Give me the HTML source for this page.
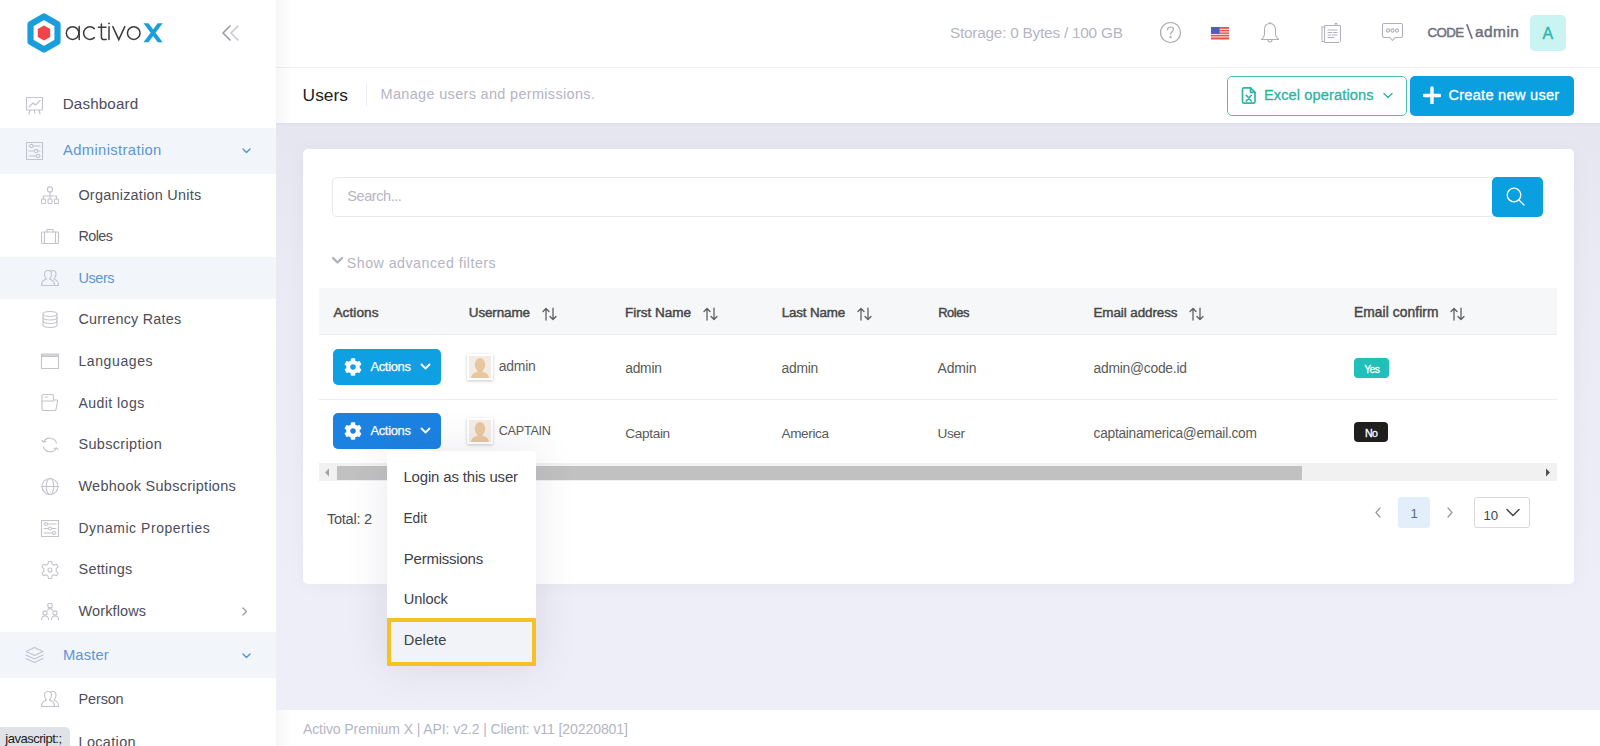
<!DOCTYPE html><html><head><meta charset="utf-8"><style>
*{box-sizing:border-box;margin:0;padding:0}
html,body{width:1600px;height:746px;overflow:hidden}
body{font-family:"Liberation Sans",sans-serif;background:#edeef7;position:relative}
.abs,.ic,.tx{position:absolute}
.tx{white-space:nowrap;line-height:1}
#side{position:absolute;left:0;top:0;width:276px;height:746px;background:#fff}
#hdr{position:absolute;left:276px;top:0;width:1324px;height:123px;background:#fff}
#card{position:absolute;left:303px;top:149px;width:1271px;height:435px;background:#fff;border-radius:5px;box-shadow:0 0 20px rgba(82,63,105,.04)}

</style></head><body>
<div id="side"></div>
<div id="hdr"></div>
<div class="abs" style="left:276px;top:123px;width:1324px;height:587px;background:linear-gradient(#e5e6ef,#e9eaf3 25%,#edeef7 80%)"></div>
<div class="abs" style="left:276px;top:123px;width:1324px;height:3px;background:linear-gradient(rgba(100,100,130,.07),rgba(100,100,130,0))"></div>
<div class="abs" style="left:276px;top:67px;width:1324px;height:1px;background:#f0f0f2"></div>
<div id="card"></div>
<div class="abs" style="left:332px;top:177px;width:1165px;height:40px;border:1px solid #e9e9ef;border-radius:5px 0 0 5px;background:#fff"></div>
<div class="tx " style="left:347.30px;top:189.30px;font-size:14.54px;letter-spacing:-0.447px;color:#b5b5c3;">Search...</div>
<div class="abs" style="left:1492px;top:177px;width:51px;height:40px;border-radius:5px;background:#0aa0e0"></div>
<svg class="ic" style="left:1505px;top:186px" width="22" height="22" viewBox="0 0 22 22" fill="none" stroke="#fff" stroke-width="1.3" stroke-linecap="round" stroke-linejoin="round"><circle cx="9" cy="9" r="6.8"/><path d="M14 14 L19 19"/></svg>
<svg class="ic" style="left:331px;top:256px" width="13" height="10" viewBox="0 0 13 10" fill="none" stroke="#b0b0bb" stroke-width="2.4" stroke-linecap="round" stroke-linejoin="round"><path d="M2 2 L6.5 6.5 L11 2"/></svg>
<div class="tx " style="left:346.80px;top:255.60px;font-size:14.20px;letter-spacing:0.501px;color:#b5b5c3;">Show advanced filters</div>
<div class="abs" style="left:319px;top:288px;width:1238px;height:47px;background:#f6f7f9;border-bottom:1px solid #ebedf2"></div>
<div class="tx " style="left:333.40px;top:305.90px;font-size:13.70px;letter-spacing:0.043px;color:#474747;-webkit-text-stroke:0.45px #474747;">Actions</div>
<div class="tx " style="left:468.80px;top:305.91px;font-size:13.44px;letter-spacing:-0.119px;color:#474747;-webkit-text-stroke:0.45px #474747;">Username</div>
<div class="tx " style="left:625.00px;top:305.90px;font-size:13.56px;letter-spacing:-0.034px;color:#474747;-webkit-text-stroke:0.45px #474747;">First Name</div>
<div class="tx " style="left:781.70px;top:305.91px;font-size:13.38px;letter-spacing:-0.148px;color:#474747;-webkit-text-stroke:0.45px #474747;">Last Name</div>
<div class="tx " style="left:938.20px;top:306.91px;font-size:12.94px;letter-spacing:-0.438px;color:#474747;-webkit-text-stroke:0.45px #474747;">Roles</div>
<div class="tx " style="left:1093.50px;top:305.91px;font-size:13.44px;letter-spacing:-0.096px;color:#474747;-webkit-text-stroke:0.45px #474747;">Email address</div>
<div class="tx " style="left:1354.00px;top:305.91px;font-size:13.79px;letter-spacing:0.084px;color:#474747;-webkit-text-stroke:0.45px #474747;">Email confirm</div>
<svg class="ic" style="left:542px;top:307px" width="15" height="14" viewBox="0 0 15 14" fill="none" stroke="#5c5c5c" stroke-width="1.25" stroke-linecap="round" stroke-linejoin="round"><path d="M4 13 V1.5 M1 4.5 L4 1.5 L7 4.5"/><path d="M11 1 V12.5 M8 9.5 L11 12.5 L14 9.5"/></svg>
<svg class="ic" style="left:703px;top:307px" width="15" height="14" viewBox="0 0 15 14" fill="none" stroke="#5c5c5c" stroke-width="1.25" stroke-linecap="round" stroke-linejoin="round"><path d="M4 13 V1.5 M1 4.5 L4 1.5 L7 4.5"/><path d="M11 1 V12.5 M8 9.5 L11 12.5 L14 9.5"/></svg>
<svg class="ic" style="left:857px;top:307px" width="15" height="14" viewBox="0 0 15 14" fill="none" stroke="#5c5c5c" stroke-width="1.25" stroke-linecap="round" stroke-linejoin="round"><path d="M4 13 V1.5 M1 4.5 L4 1.5 L7 4.5"/><path d="M11 1 V12.5 M8 9.5 L11 12.5 L14 9.5"/></svg>
<svg class="ic" style="left:1189px;top:307px" width="15" height="14" viewBox="0 0 15 14" fill="none" stroke="#5c5c5c" stroke-width="1.25" stroke-linecap="round" stroke-linejoin="round"><path d="M4 13 V1.5 M1 4.5 L4 1.5 L7 4.5"/><path d="M11 1 V12.5 M8 9.5 L11 12.5 L14 9.5"/></svg>
<svg class="ic" style="left:1450px;top:307px" width="15" height="14" viewBox="0 0 15 14" fill="none" stroke="#5c5c5c" stroke-width="1.25" stroke-linecap="round" stroke-linejoin="round"><path d="M4 13 V1.5 M1 4.5 L4 1.5 L7 4.5"/><path d="M11 1 V12.5 M8 9.5 L11 12.5 L14 9.5"/></svg>
<div class="abs" style="left:319px;top:399px;width:1238px;height:1px;background:#ebedf2"></div>
<div class="abs" style="left:333px;top:349px;width:108px;height:36px;border-radius:5px;background:#0ea0e3"></div>
<svg class="ic" style="left:344px;top:358px" width="18" height="18" viewBox="0 0 512 512"><path fill="#fff" d="M487.4 315.7l-42.6-24.6c4.3-23.2 4.3-47 0-70.2l42.6-24.6c4.9-2.8 7.1-8.6 5.5-14-11.1-35.6-30-67.8-54.7-94.6-3.8-4.1-10-5.100-14.800-2.300L380.8 110c-17.9-15.4-38.5-27.3-60.8-35.1V25.8c0-5.600-3.900-10.500-9.400-11.700-36.700-8.200-74.300-7.800-109.200 0-5.500 1.200-9.400 6.100-9.400 11.700V75c-22.200 7.900-42.800 19.800-60.800 35.100L88.700 85.500c-4.900-2.800-11-1.900-14.800 2.300-24.700 26.700-43.600 58.900-54.700 94.600-1.700 5.400 .6 11.200 5.500 14L67.300 221c-4.300 23.200-4.300 47 0 70.200l-42.600 24.600c-4.900 2.800-7.100 8.600-5.500 14 11.100 35.600 30 67.800 54.700 94.600 3.800 4.100 10 5.100 14.800 2.300l42.600-24.600c17.900 15.400 38.500 27.300 60.800 35.100v49.200c0 5.600 3.900 10.500 9.400 11.700 36.700 8.200 74.300 7.800 109.200 0 5.500-1.200 9.400-6.100 9.400-11.700v-49.200c22.200-7.900 42.800-19.800 60.800-35.100l42.600 24.600c4.900 2.800 11 1.900 14.800-2.300 24.700-26.700 43.600-58.900 54.700-94.600 1.500-5.500-.7-11.300-5.600-14.100zM256 336c-44.100 0-80-35.900-80-80s35.900-80 80-80 80 35.900 80 80-35.900 80-80 80z"/></svg>
<div class="tx " style="left:370.40px;top:360.90px;font-size:12.93px;letter-spacing:-0.301px;color:#fff;-webkit-text-stroke:0.25px #fff;">Actions</div>
<svg class="ic" style="left:419px;top:362px" width="13" height="10" viewBox="0 0 13 10" fill="none" stroke="#fff" stroke-width="1.8" stroke-linecap="round" stroke-linejoin="round"><path d="M2.5 2.5 L6.5 6.5 L10.5 2.5"/></svg>
<div class="abs" style="left:467px;top:354px;width:26px;height:26px;background:#f3ece6;border:2px solid #fff;box-shadow:0 1px 3px rgba(0,0,0,.22);overflow:hidden"><svg width="22" height="22" viewBox="0 0 22 22" style="position:absolute;left:0;top:0"><ellipse cx="11" cy="8.8" rx="5.2" ry="6.8" fill="#e8c79f"/><path d="M8.5 14 V16 C5 16.5 2.5 18 2 22 H20 C19.5 18 17 16.5 13.5 16 V14 Z" fill="#e8c79f"/></svg></div>
<div class="abs" style="left:333px;top:413px;width:108px;height:36px;border-radius:5px;background:#1b82e2"></div>
<svg class="ic" style="left:344px;top:422px" width="18" height="18" viewBox="0 0 512 512"><path fill="#fff" d="M487.4 315.7l-42.6-24.6c4.3-23.2 4.3-47 0-70.2l42.6-24.6c4.9-2.8 7.1-8.6 5.5-14-11.1-35.6-30-67.8-54.7-94.6-3.8-4.1-10-5.100-14.800-2.300L380.8 110c-17.9-15.4-38.5-27.3-60.8-35.1V25.8c0-5.600-3.900-10.500-9.400-11.700-36.700-8.200-74.300-7.800-109.200 0-5.500 1.200-9.400 6.100-9.400 11.700V75c-22.200 7.900-42.800 19.800-60.800 35.100L88.700 85.500c-4.900-2.800-11-1.900-14.800 2.300-24.700 26.700-43.600 58.900-54.700 94.600-1.700 5.400 .6 11.200 5.500 14L67.300 221c-4.300 23.200-4.300 47 0 70.200l-42.600 24.600c-4.900 2.800-7.100 8.600-5.500 14 11.100 35.600 30 67.800 54.700 94.600 3.800 4.100 10 5.100 14.800 2.300l42.600-24.600c17.900 15.400 38.500 27.300 60.800 35.100v49.200c0 5.600 3.900 10.500 9.400 11.700 36.700 8.200 74.300 7.800 109.200 0 5.500-1.200 9.400-6.100 9.400-11.700v-49.200c22.200-7.900 42.800-19.800 60.800-35.100l42.600 24.600c4.900 2.800 11 1.900 14.800-2.300 24.700-26.700 43.600-58.900 54.700-94.600 1.500-5.500-.7-11.300-5.600-14.100zM256 336c-44.100 0-80-35.900-80-80s35.900-80 80-80 80 35.900 80 80-35.900 80-80 80z"/></svg>
<div class="tx " style="left:370.40px;top:424.90px;font-size:12.93px;letter-spacing:-0.301px;color:#fff;-webkit-text-stroke:0.25px #fff;">Actions</div>
<svg class="ic" style="left:419px;top:426px" width="13" height="10" viewBox="0 0 13 10" fill="none" stroke="#fff" stroke-width="1.8" stroke-linecap="round" stroke-linejoin="round"><path d="M2.5 2.5 L6.5 6.5 L10.5 2.5"/></svg>
<div class="abs" style="left:467px;top:418px;width:26px;height:26px;background:#f3ece6;border:2px solid #fff;box-shadow:0 1px 3px rgba(0,0,0,.22);overflow:hidden"><svg width="22" height="22" viewBox="0 0 22 22" style="position:absolute;left:0;top:0"><ellipse cx="11" cy="8.8" rx="5.2" ry="6.8" fill="#e8c79f"/><path d="M8.5 14 V16 C5 16.5 2.5 18 2 22 H20 C19.5 18 17 16.5 13.5 16 V14 Z" fill="#e8c79f"/></svg></div>
<div class="tx " style="left:498.70px;top:359.90px;font-size:13.91px;letter-spacing:-0.199px;color:#5a5a5a;">admin</div>
<div class="tx " style="left:498.70px;top:425.11px;font-size:12.66px;letter-spacing:-0.272px;color:#5a5a5a;">CAPTAIN</div>
<div class="tx " style="left:625.20px;top:362.40px;font-size:13.85px;letter-spacing:-0.237px;color:#5a5a5a;">admin</div>
<div class="tx " style="left:781.50px;top:362.40px;font-size:13.85px;letter-spacing:-0.237px;color:#5a5a5a;">admin</div>
<div class="tx " style="left:937.50px;top:361.40px;font-size:13.98px;letter-spacing:-0.157px;color:#5a5a5a;">Admin</div>
<div class="tx " style="left:1093.60px;top:362.41px;font-size:13.80px;letter-spacing:-0.229px;color:#5a5a5a;">admin@code.id</div>
<div class="tx " style="left:625.20px;top:427.01px;font-size:13.63px;letter-spacing:-0.327px;color:#5a5a5a;">Captain</div>
<div class="tx " style="left:781.50px;top:427.00px;font-size:13.59px;letter-spacing:-0.376px;color:#5a5a5a;">America</div>
<div class="tx " style="left:937.50px;top:427.00px;font-size:13.62px;letter-spacing:-0.410px;color:#5a5a5a;">User</div>
<div class="tx " style="left:1093.60px;top:427.00px;font-size:13.71px;letter-spacing:-0.262px;color:#5a5a5a;">captainamerica@email.com</div>
<div class="abs" style="left:1354px;top:358px;width:35px;height:20px;border-radius:4px;background:#1fc0b7"></div>
<div class="tx " style="left:1364.20px;top:364.50px;font-size:10.24px;letter-spacing:-0.498px;color:#fff;-webkit-text-stroke:0.3px #fff;">Yes</div>
<div class="abs" style="left:1354px;top:422px;width:34px;height:20px;border-radius:4px;background:#1f1f1f"></div>
<div class="tx " style="left:1364.90px;top:428.01px;font-size:10.62px;letter-spacing:-0.588px;color:#fff;-webkit-text-stroke:0.3px #fff;">No</div>
<div class="abs" style="left:319px;top:463px;width:1238px;height:18px;background:#f1f1f1"></div>
<div class="abs" style="left:337px;top:466px;width:965px;height:14px;background:#c1c1c1"></div>
<svg class="ic" style="left:324px;top:468px" width="6" height="9" viewBox="0 0 6 9"><path d="M5 0.5 L1 4.5 L5 8.5 Z" fill="#a3a3a3"/></svg>
<svg class="ic" style="left:1545px;top:468px" width="6" height="9" viewBox="0 0 6 9"><path d="M1 0.5 L5 4.5 L1 8.5 Z" fill="#505050"/></svg>
<div class="tx " style="left:326.90px;top:512.41px;font-size:14.56px;letter-spacing:-0.237px;color:#4d4d5a;">Total: 2</div>
<svg class="ic" style="left:1373px;top:506px" width="10" height="13" viewBox="0 0 10 13" fill="none" stroke="#9a9aa3" stroke-width="1.3" stroke-linecap="round" stroke-linejoin="round"><path d="M7 2 L3 6.5 L7 11"/></svg>
<div class="abs" style="left:1398px;top:497px;width:32px;height:31px;border-radius:3px;background:#e2effb"></div>
<div class="tx " style="left:1410.50px;top:507.40px;font-size:13.19px;letter-spacing:0.000px;color:#5a6c80;">1</div>
<svg class="ic" style="left:1445px;top:506px" width="10" height="13" viewBox="0 0 10 13" fill="none" stroke="#9a9aa3" stroke-width="1.3" stroke-linecap="round" stroke-linejoin="round"><path d="M3 2 L7 6.5 L3 11"/></svg>
<div class="abs" style="left:1474px;top:497px;width:56px;height:31px;border:1px solid #d9d9d9;border-radius:3px;background:#fff"></div>
<div class="tx " style="left:1483.40px;top:509.00px;font-size:13.20px;letter-spacing:0.000px;color:#444;">10</div>
<svg class="ic" style="left:1505px;top:507px" width="16" height="11" viewBox="0 0 16 11" fill="none" stroke="#444" stroke-width="1.5" stroke-linecap="round" stroke-linejoin="round"><path d="M2 2.5 L8 8.5 L14 2.5"/></svg>
<div class="abs" style="left:387px;top:451px;width:149px;height:215px;background:#fff;border-radius:4px;box-shadow:0 0 40px 0 rgba(82,63,105,.13)"></div>
<div class="abs" style="left:387px;top:618px;width:149px;height:48px;background:#f1f3f8;border:4px solid #f5c125"></div>
<div class="tx " style="left:403.40px;top:470.22px;font-size:14.93px;letter-spacing:-0.137px;color:#404048;">Login as this user</div>
<div class="tx " style="left:403.40px;top:511.80px;font-size:13.77px;letter-spacing:0.017px;color:#404048;">Edit</div>
<div class="tx " style="left:403.80px;top:551.81px;font-size:14.93px;letter-spacing:-0.188px;color:#404048;">Permissions</div>
<div class="tx " style="left:403.80px;top:592.41px;font-size:14.64px;letter-spacing:-0.118px;color:#404048;">Unlock</div>
<div class="tx " style="left:403.80px;top:632.61px;font-size:14.64px;letter-spacing:0.059px;color:#404048;">Delete</div>
<div class="abs" style="left:276px;top:710px;width:1324px;height:36px;background:#fff"></div>
<div class="tx " style="left:302.90px;top:722.01px;font-size:14.06px;letter-spacing:-0.101px;color:#b5b5c3;">Activo Premium X | API: v2.2 | Client: v11 [20220801]</div>
<div class="tx " style="left:950.00px;top:24.50px;font-size:15.36px;letter-spacing:-0.230px;color:#b5b5c3;">Storage: 0 Bytes / 100 GB</div>
<svg class="ic" style="left:1159px;top:21px" width="23" height="23" viewBox="0 0 23 23" fill="none" stroke="#a9a9b3" stroke-width="1.2" stroke-linecap="round" stroke-linejoin="round"><circle cx="11.5" cy="11.5" r="10"/><path d="M8.6 8.8 C8.6 7 9.9 6 11.5 6 C13.1 6 14.4 7 14.4 8.6 C14.4 10.6 11.6 10.9 11.6 13.2"/><circle cx="11.6" cy="16.2" r="0.5" fill="#a9a9b3"/></svg>
<svg class="ic" style="left:1211px;top:27px" width="18" height="13" viewBox="0 0 18 13"><rect x="0" y="0" width="18" height="12.5" fill="#e3524f"/><rect x="0" y="1.8" width="18" height="1.2" fill="#f3d6d6"/><rect x="0" y="4.3" width="18" height="1.2" fill="#f3d6d6"/><rect x="0" y="6.8" width="18" height="1.2" fill="#f3d6d6"/><rect x="0" y="9.3" width="18" height="1.2" fill="#f3d6d6"/><rect x="0" y="0" width="8.5" height="6.8" fill="#4a5fc0"/></svg>
<svg class="ic" style="left:1259px;top:21px" width="22" height="23" viewBox="0 0 22 23" fill="none" stroke="#b0b0ba" stroke-width="1.1" stroke-linecap="round" stroke-linejoin="round"><path d="M11 2.5 C7 2.5 5.5 5.5 5.5 9 V13.5 C5.5 15.5 4 17 2.5 18.5 H19.5 C18 17 16.5 15.5 16.5 13.5 V9 C16.5 5.5 15 2.5 11 2.5 Z"/><path d="M9 18.8 C9 20.3 10 21 11 21 C12 21 13 20.3 13 18.8"/><path d="M10 2.5 C10 1.5 12 1.5 12 2.5"/></svg>
<svg class="ic" style="left:1320px;top:22px" width="23" height="22" viewBox="0 0 23 22" fill="none" stroke="#b0b0ba" stroke-width="1.0" stroke-linecap="round" stroke-linejoin="round"><path d="M2 5 H5 M2 5 V19.5 H4"/><path d="M5 3.5 H20.5 V19 L19 20.5 H5 Z"/><path d="M8 8 H17 M8 10.5 H12 M13.5 10.5 H17 M8 13 H11 M12.5 13 H17 M8 15.5 H14"/><path d="M15 3.5 V1.5 H17 V3.5"/></svg>
<svg class="ic" style="left:1381px;top:22px" width="23" height="21" viewBox="0 0 23 21" fill="none" stroke="#b0b0ba" stroke-width="1.1" stroke-linecap="round" stroke-linejoin="round"><path d="M3 1.5 H20 C21 1.5 21.5 2 21.5 3 V14 C21.5 15 21 15.5 20 15.5 H14 L11.5 18.5 L9 15.5 H3 C2 15.5 1.5 15 1.5 14 V3 C1.5 2 2 1.5 3 1.5 Z"/><circle cx="7" cy="8.5" r="1.6"/><circle cx="11.5" cy="8.5" r="1.6"/><circle cx="16" cy="8.5" r="1.6"/></svg>
<div class="tx " style="left:1427.50px;top:25.81px;font-size:13.26px;letter-spacing:-0.606px;color:#6f7080;-webkit-text-stroke:0.5px #6f7080;">CODE</div>
<svg class="ic" style="left:1465px;top:23px" width="9" height="17" viewBox="0 0 9 17"><path d="M1.8 1.2 L7.2 15.8" stroke="#6f7080" stroke-width="1.7"/></svg>
<div class="tx " style="left:1475.00px;top:23.81px;font-size:15.46px;letter-spacing:0.465px;color:#6f7080;-webkit-text-stroke:0.5px #6f7080;">admin</div>
<div class="abs" style="left:1530px;top:15px;width:36px;height:36px;border-radius:5px;background:#c9f4f2"></div>
<div class="tx " style="left:1542.50px;top:26.01px;font-size:15.94px;letter-spacing:0.000px;color:#25b4ab;-webkit-text-stroke:0.3px #25b4ab;">A</div>
<div class="tx " style="left:302.60px;top:86.60px;font-size:17.39px;letter-spacing:0.002px;color:#232323;">Users</div>
<div class="abs" style="left:366px;top:84px;width:1px;height:22px;background:#ececf2"></div>
<div class="tx " style="left:380.60px;top:87.41px;font-size:14.49px;letter-spacing:0.320px;color:#b5b5c3;">Manage users and permissions.</div>
<div class="abs" style="left:1227px;top:76px;width:180px;height:40px;border:1px solid #4dbfb1;border-radius:5px;background:#fff"></div>
<svg class="ic" style="left:1240px;top:86px" width="17" height="19" viewBox="0 0 17 19" fill="none" stroke="#2fb4a5" stroke-width="1.7" stroke-linecap="round" stroke-linejoin="round"><path d="M4 1.8 H10.5 L15 6.3 V15.5 C15 16.5 14.5 17.2 13.5 17.2 H4 C3 17.2 2.5 16.5 2.5 15.5 V3.5 C2.5 2.5 3 1.8 4 1.8 Z"/><path d="M10.5 1.8 V6.3 H15"/><path d="M6.3 9.3 L11.2 15 M11.2 9.3 L6.3 15"/></svg>
<div class="tx " style="left:1263.90px;top:87.70px;font-size:14.64px;letter-spacing:0.104px;color:#2db3a4;-webkit-text-stroke:0.3px #2db3a4;">Excel operations</div>
<svg class="ic" style="left:1382px;top:91px" width="12" height="9" viewBox="0 0 12 9" fill="none" stroke="#2db3a4" stroke-width="1.4" stroke-linecap="round" stroke-linejoin="round"><path d="M2 2.5 L6 6.5 L10 2.5"/></svg>
<div class="abs" style="left:1410px;top:76px;width:164px;height:40px;border-radius:5px;background:#0aa0e0"></div>
<svg class="ic" style="left:1423px;top:86px" width="18" height="18" viewBox="0 0 18 18"><path d="M9 2 V17 M1.5 9.5 H16.5" stroke="#fff" stroke-width="3.4" stroke-linecap="round"/></svg>
<div class="tx " style="left:1448.40px;top:87.70px;font-size:14.64px;letter-spacing:0.252px;color:#fff;-webkit-text-stroke:0.3px #fff;">Create new user</div>
<svg class="ic" style="left:25px;top:12px" width="38" height="42" viewBox="0 0 38 42"><polygon points="19,4.5 32.5,12.2 32.5,29.8 19,37.5 5.5,29.8 5.5,12.2" fill="none" stroke="#1a9edb" stroke-width="6.2" stroke-linejoin="round"/><polygon points="19,13.5 25.2,17.1 25.2,24.9 19,28.5 12.8,24.9 12.8,17.1" fill="#f0444a"/></svg>
<svg class="ic" style="left:60px;top:15px" width="110" height="35" viewBox="0 0 110 35" fill="none" stroke="#3b3b3b" stroke-width="1.5" stroke-linecap="round"><circle cx="12.6" cy="18.1" r="6.3"/><path d="M19.2 11.6 V24.6"/><path d="M34.3 13.6 A6.3 6.3 0 1 0 34.3 22.6"/><path d="M41.4 9 V22 C41.4 24 42.5 24.6 44 24.6 H46.2 M38.4 12.2 H46"/><path d="M49 11.8 V24.6"/><circle cx="49" cy="8.4" r="0.9" fill="#3b3b3b" stroke="none"/><path d="M52.8 11.6 L58.8 24.6 L64.8 11.6"/><circle cx="73.75" cy="18.1" r="6.3"/><path d="M83.5 8.2 H88.5 L102.7 27.2 H97.7 Z M97.7 8.2 H102.7 L88.5 27.2 H83.5 Z" fill="#1b9fdc" stroke="none"/></svg>
<svg class="ic" style="left:221px;top:24px" width="21" height="18" viewBox="0 0 21 18" fill="none" stroke="#c3c4cb" stroke-width="1.1" stroke-linecap="round" stroke-linejoin="round"><path d="M9 2 L2 9 L9 16" stroke="#9a9aa6" stroke-width="1.6"/><path d="M17 2 L10 9 L17 16" stroke="#c9c9d1" stroke-width="1.6"/></svg>
<div class="abs" style="left:0;top:128px;width:276px;height:46px;background:#f2f5f9"></div>
<div class="abs" style="left:0;top:257px;width:276px;height:42px;background:#f2f5f9"></div>
<div class="abs" style="left:0;top:632px;width:276px;height:46px;background:#f2f5f9"></div>
<div class="tx " style="left:62.65px;top:96.40px;font-size:15.22px;letter-spacing:0.148px;color:#4d4d5a;">Dashboard</div>
<div class="tx " style="left:63.00px;top:143.31px;font-size:14.78px;letter-spacing:0.366px;color:#5c96d6;">Administration</div>
<div class="tx " style="left:78.40px;top:187.60px;font-size:14.42px;letter-spacing:0.253px;color:#4d4d5a;">Organization Units</div>
<div class="tx " style="left:78.40px;top:229.40px;font-size:14.35px;letter-spacing:-0.515px;color:#4d4d5a;">Roles</div>
<div class="tx " style="left:78.40px;top:271.01px;font-size:14.49px;letter-spacing:-0.407px;color:#5c96d6;">Users</div>
<div class="tx " style="left:78.40px;top:312.40px;font-size:14.35px;letter-spacing:0.243px;color:#4d4d5a;">Currency Rates</div>
<div class="tx " style="left:78.40px;top:354.01px;font-size:14.06px;letter-spacing:0.589px;color:#4d4d5a;">Languages</div>
<div class="tx " style="left:78.40px;top:395.81px;font-size:14.06px;letter-spacing:0.454px;color:#4d4d5a;">Audit logs</div>
<div class="tx " style="left:78.40px;top:437.32px;font-size:14.49px;letter-spacing:0.338px;color:#4d4d5a;">Subscription</div>
<div class="tx " style="left:78.40px;top:479.10px;font-size:14.49px;letter-spacing:0.274px;color:#4d4d5a;">Webhook Subscriptions</div>
<div class="tx " style="left:78.40px;top:521.61px;font-size:13.91px;letter-spacing:0.589px;color:#4d4d5a;">Dynamic Properties</div>
<div class="tx " style="left:78.60px;top:562.32px;font-size:14.49px;letter-spacing:0.173px;color:#4d4d5a;">Settings</div>
<div class="tx " style="left:78.60px;top:603.91px;font-size:14.49px;letter-spacing:0.113px;color:#4d4d5a;">Workflows</div>
<div class="tx " style="left:62.90px;top:647.91px;font-size:14.78px;letter-spacing:0.148px;color:#5c96d6;">Master</div>
<div class="tx " style="left:78.60px;top:691.82px;font-size:14.49px;letter-spacing:-0.168px;color:#4d4d5a;">Person</div>
<div class="tx " style="left:78.50px;top:735.01px;font-size:14.49px;letter-spacing:0.331px;color:#4d4d5a;">Location</div>
<svg class="ic" style="left:25px;top:96px" width="19" height="19" viewBox="0 0 19 19" fill="none" stroke="#c3c4cb" stroke-width="1.1" stroke-linecap="round" stroke-linejoin="round"><rect x="1.5" y="1.5" width="16" height="12.5"/><path d="M4 11 L8 7 L10.5 9 L15 4.5"/><path d="M5 14 L4 18 M14 14 L15 18 M9.5 14 V17"/></svg>
<svg class="ic" style="left:25px;top:141px" width="19" height="20" viewBox="0 0 19 20" fill="none" stroke="#c3c4cb" stroke-width="1.1" stroke-linecap="round" stroke-linejoin="round"><rect x="1.5" y="1.5" width="16" height="17"/><path d="M4 5 H15 M4 10 H15 M4 15 H15"/><circle cx="6.5" cy="5" r="1.6" fill="#fff"/><circle cx="11" cy="10" r="1.6" fill="#fff"/><circle cx="13" cy="15" r="1.6" fill="#fff"/></svg>
<svg class="ic" style="left:40px;top:186px" width="20" height="19" viewBox="0 0 20 19" fill="none" stroke="#c3c4cb" stroke-width="1.1" stroke-linecap="round" stroke-linejoin="round"><circle cx="10" cy="3.5" r="2.6"/><path d="M10 6 V10 M3.5 13 V10 H16.5 V13 M10 10 V13"/><rect x="1.5" y="13" width="4" height="4.5" rx="0.8"/><rect x="8" y="13" width="4" height="4.5" rx="0.8"/><rect x="14.5" y="13" width="4" height="4.5" rx="0.8"/></svg>
<svg class="ic" style="left:40px;top:228px" width="20" height="17" viewBox="0 0 20 17" fill="none" stroke="#c3c4cb" stroke-width="1.1" stroke-linecap="round" stroke-linejoin="round"><rect x="1.5" y="4" width="17" height="11.5" rx="1"/><path d="M7 4 V1.5 H13 V4 M4.5 4 V15.5 M15.5 4 V15.5"/></svg>
<svg class="ic" style="left:40px;top:269px" width="20" height="18" viewBox="0 0 20 18" fill="none" stroke="#c3c4cb" stroke-width="1.1" stroke-linecap="round" stroke-linejoin="round"><path d="M1.5 16.5 C1.5 12 4 11 6.5 10 C5 8.5 4.5 7 4.5 5 C4.5 2.5 6 1.5 8 1.5 C10 1.5 11.5 2.5 11.5 5 C11.5 7 11 8.5 9.5 10 C12 11 14.5 12 14.5 16.5 Z"/><path d="M10.5 2.2 C11.2 1.7 12 1.5 12.5 1.5 C14.5 1.5 16 2.5 16 5 C16 7 15.5 8.5 14 10 C16.5 11 18.5 12 18.5 16.5 H14.5"/></svg>
<svg class="ic" style="left:40px;top:310px" width="20" height="20" viewBox="0 0 20 20" fill="none" stroke="#c3c4cb" stroke-width="1.1" stroke-linecap="round" stroke-linejoin="round"><ellipse cx="10" cy="4" rx="7" ry="2.5"/><path d="M3 4 V15 C3 16.5 6 17.5 10 17.5 C14 17.5 17 16.5 17 15 V4"/><path d="M3 7.5 C3 9 6 10 10 10 C14 10 17 9 17 7.5 M3 11 C3 12.5 6 13.5 10 13.5 C14 13.5 17 12.5 17 11"/></svg>
<svg class="ic" style="left:40px;top:352px" width="20" height="18" viewBox="0 0 20 18" fill="none" stroke="#c3c4cb" stroke-width="1.1" stroke-linecap="round" stroke-linejoin="round"><rect x="1.5" y="4.5" width="17" height="12"/><path d="M1.5 4.5 V2 H18.5 V4.5 M1.5 3.2 H18.5"/></svg>
<svg class="ic" style="left:40px;top:393px" width="19" height="19" viewBox="0 0 19 19" fill="none" stroke="#c3c4cb" stroke-width="1.1" stroke-linecap="round" stroke-linejoin="round"><path d="M2 3 C2 2 2.5 1.5 3.5 1.5 H12 C13 1.5 13.5 2 13.5 3 V7 H16.5 C17.5 7 17.8 7.5 17.5 8.5 L16 16.5 C15.8 17.3 15.3 17.5 14.5 17.5 H3 C2.3 17.5 2 17 2 16.5 Z"/><path d="M2 8 H13.5 M5 4 H8"/></svg>
<svg class="ic" style="left:40px;top:436px" width="20" height="18" viewBox="0 0 20 18" fill="none" stroke="#c3c4cb" stroke-width="1.1" stroke-linecap="round" stroke-linejoin="round"><path d="M16.5 7 A7 7 0 0 0 3.6 6"/><path d="M3.5 11 A7 7 0 0 0 16.4 12"/><path d="M3.6 6 L2 4.5 M3.6 6 L6 5.5 M16.4 12 L18 13.5 M16.4 12 L14 12.5"/></svg>
<svg class="ic" style="left:40px;top:477px" width="20" height="19" viewBox="0 0 20 19" fill="none" stroke="#c3c4cb" stroke-width="1.1" stroke-linecap="round" stroke-linejoin="round"><circle cx="10" cy="9.5" r="8"/><path d="M2 9.5 H18"/><ellipse cx="10" cy="9.5" rx="3.8" ry="8"/></svg>
<svg class="ic" style="left:40px;top:519px" width="20" height="19" viewBox="0 0 20 19" fill="none" stroke="#c3c4cb" stroke-width="1.1" stroke-linecap="round" stroke-linejoin="round"><rect x="1.5" y="1.5" width="17" height="16"/><path d="M4 5 H16 M4 9.5 H16 M4 14 H16"/><circle cx="6" cy="5" r="1.5" fill="#fff"/><circle cx="10" cy="9.5" r="1.5" fill="#fff"/><circle cx="14" cy="14" r="1.5" fill="#fff"/></svg>
<svg class="ic" style="left:40px;top:560px" width="20" height="20" viewBox="0 0 20 20" fill="none" stroke="#c3c4cb" stroke-width="1.1" stroke-linecap="round" stroke-linejoin="round"><path d="M8.5 1.5 H11.5 L12 4 L14.2 5.2 L16.6 4.3 L18.1 6.9 L16.2 8.6 V11.4 L18.1 13.1 L16.6 15.7 L14.2 14.8 L12 16 L11.5 18.5 H8.5 L8 16 L5.8 14.8 L3.4 15.7 L1.9 13.1 L3.8 11.4 V8.6 L1.9 6.9 L3.4 4.3 L5.8 5.2 L8 4 Z"/><circle cx="10" cy="10" r="2"/></svg>
<svg class="ic" style="left:40px;top:602px" width="20" height="19" viewBox="0 0 20 19" fill="none" stroke="#c3c4cb" stroke-width="1.1" stroke-linecap="round" stroke-linejoin="round"><circle cx="10" cy="3.5" r="2.3"/><circle cx="5" cy="11" r="2.1"/><circle cx="15" cy="11" r="2.1"/><path d="M7.5 8 L10 6 L12.5 8 M1.5 17.5 C1.5 15 3 14 5 14 C7 14 8.5 15 8.5 17.5 M11.5 17.5 C11.5 15 13 14 15 14 C17 14 18.5 15 18.5 17.5"/></svg>
<svg class="ic" style="left:24px;top:646px" width="21" height="19" viewBox="0 0 21 19" fill="none" stroke="#c3c4cb" stroke-width="1.1" stroke-linecap="round" stroke-linejoin="round"><path d="M10.5 1.5 L19 5.5 L10.5 9.5 L2 5.5 Z"/><path d="M2 9 L10.5 13 L19 9 M2 12.5 L10.5 16.5 L19 12.5"/></svg>
<svg class="ic" style="left:40px;top:689px" width="20" height="19" viewBox="0 0 20 19" fill="none" stroke="#c3c4cb" stroke-width="1.1" stroke-linecap="round" stroke-linejoin="round"><path d="M1.5 17.5 C1.5 13 4 12 6.5 11 C5 9.5 4.5 8 4.5 6 C4.5 3.5 6 2.5 8 2.5 C10 2.5 11.5 3.5 11.5 6 C11.5 8 11 9.5 9.5 11 C12 12 14.5 13 14.5 17.5 Z"/><path d="M10.5 3.2 C11.2 2.7 12 2.5 12.5 2.5 C14.5 2.5 16 3.5 16 6 C16 8 15.5 9.5 14 11 C16.5 12 18.5 13 18.5 17.5 H14.5"/></svg>
<svg class="ic" style="left:240px;top:146px" width="13" height="10" viewBox="0 0 13 10" fill="none" stroke="#5c96d6" stroke-width="1.1" stroke-linecap="round" stroke-linejoin="round"><path d="M3 3 L6.5 6.5 L10 3" stroke="#5c96d6" stroke-width="1.5"/></svg>
<svg class="ic" style="left:240px;top:651px" width="13" height="10" viewBox="0 0 13 10" fill="none" stroke="#5c96d6" stroke-width="1.1" stroke-linecap="round" stroke-linejoin="round"><path d="M3 3 L6.5 6.5 L10 3" stroke="#5c96d6" stroke-width="1.5"/></svg>
<svg class="ic" style="left:240px;top:605px" width="10" height="13" viewBox="0 0 10 13" fill="none" stroke="#c3c4cb" stroke-width="1.1" stroke-linecap="round" stroke-linejoin="round"><path d="M3 3 L6.5 6.5 L3 10" stroke="#9a9aa6" stroke-width="1.3"/></svg>
<div class="abs" style="left:276px;top:0;width:16px;height:123px;background:linear-gradient(90deg,rgba(82,63,105,.05),rgba(82,63,105,0))"></div>
<div class="abs" style="left:276px;top:710px;width:16px;height:36px;background:linear-gradient(90deg,rgba(82,63,105,.05),rgba(82,63,105,0))"></div>
<div class="abs" style="left:0;top:727px;width:70px;height:19px;background:#dfe2e7;border-top-right-radius:5px"></div>
<div class="tx " style="left:5.33px;top:732.00px;font-size:13.00px;letter-spacing:-0.497px;color:#202124;">javascript:;</div>
</body></html>
